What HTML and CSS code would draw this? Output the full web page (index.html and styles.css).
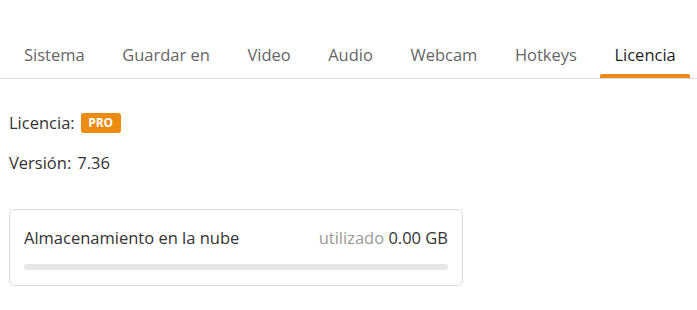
FILE: index.html
```html
<!DOCTYPE html>
<html lang="es">
<head>
<meta charset="utf-8">
<title>Licencia</title>
<link rel="stylesheet" href="styles.css">
</head>
<body>
<nav class="tabs">
  <a class="tab">Sistema</a>
  <a class="tab">Guardar en</a>
  <a class="tab">Video</a>
  <a class="tab">Audio</a>
  <a class="tab">Webcam</a>
  <a class="tab">Hotkeys</a>
  <a class="tab active">Licencia</a>
</nav>
<main class="content">
  <div class="row"><span class="label">Licencia:</span><span class="badge">PRO</span></div>
  <div class="row"><span class="label">Versión:</span><span class="value">7.36</span></div>
  <section class="card">
    <div class="card-head">
      <span class="card-title">Almacenamiento en la nube</span>
      <span class="usage"><span class="muted">utilizado</span> 0.00 GB</span>
    </div>
    <div class="bar"><div class="fill" style="width:0%"></div></div>
  </section>
</main>
</body>
</html>
```
FILE: styles.css
```css
html, body {
  margin: 0;
  padding: 0;
  background: #ffffff;
}
body {
  font-family: "Open Sans", "Noto Sans", sans-serif;
  font-size: 16.5px;
  color: #333333;
}
.tabs {
  display: flex;
  gap: 9.5px;
  padding: 0 0 0 10px;
  border-bottom: 1px solid #dcdcdc;
}
.tab {
  position: relative;
  padding: 44px 14px 12px;
  line-height: 22px;
  color: #666666;
  cursor: pointer;
}
.tab.active {
  color: #1f1f1f;
}
.tab.active::after {
  content: "";
  position: absolute;
  left: 0;
  right: 0;
  bottom: 0;
  height: 4px;
  border-radius: 2px 2px 0 0;
  background: #e8891a;
}
.content {
  padding: 32px 9px 0;
}
.row {
  display: flex;
  align-items: center;
  gap: 6px;
  line-height: 24px;
  height: 24px;
}
.row + .row {
  margin-top: 16px;
}
.badge {
  display: inline-flex;
  align-items: center;
  justify-content: center;
  width: 40px;
  height: 20px;
  border-radius: 3px;
  background: #ec8a12;
  color: #ffffff;
  font-weight: 700;
  font-size: 12px;
  line-height: 20px;
}
.card {
  margin-top: 34px;
  width: 454px;
  box-sizing: border-box;
  border: 1px solid #d9d9d9;
  border-radius: 6px;
  padding: 16px 14px 15px;
}
.card-head {
  display: flex;
  justify-content: space-between;
  line-height: 24px;
}
.muted {
  color: #9a9a9a;
}
.bar {
  margin-top: 14px;
  height: 6px;
  border-radius: 3px;
  background: #e6e6e6;
  overflow: hidden;
}
.fill {
  height: 100%;
  background: #e8891a;
}
```
